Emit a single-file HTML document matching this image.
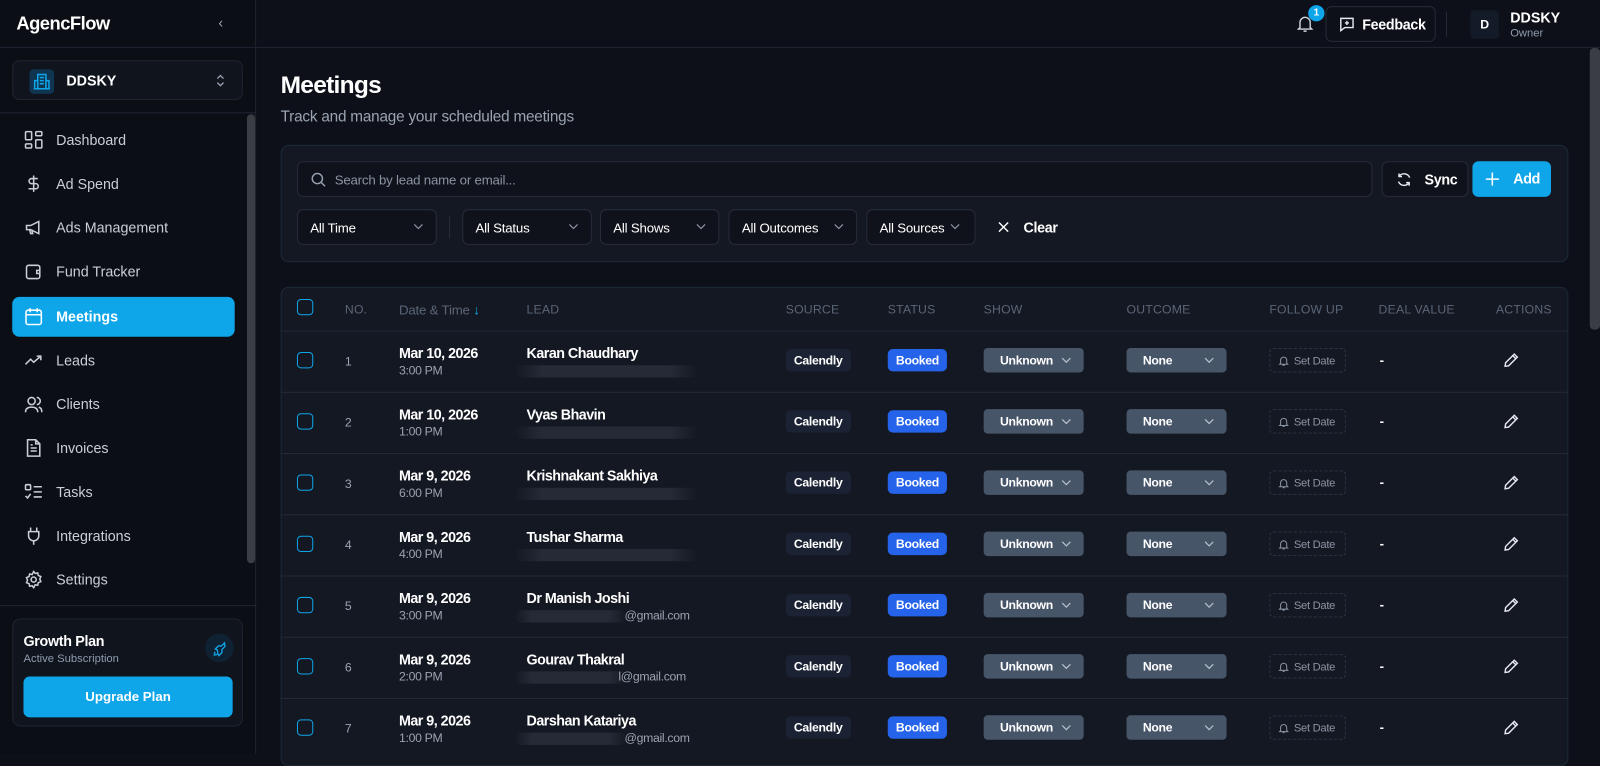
<!DOCTYPE html>
<html><head><meta charset="utf-8"><style>
*{box-sizing:border-box;margin:0;padding:0}
html,body{width:1600px;height:739px;overflow:hidden;background:#0d1018}
#w{position:absolute;left:0;top:0;width:1568px;height:724px;transform:scale(1.0204);transform-origin:0 0;font-family:"Liberation Sans",sans-serif;color:#e6e9ef}
.sb{position:absolute;left:0;top:0;width:251px;height:739px;background:#0b0e15;border-right:1px solid #1e2431}
.logo{position:absolute;left:16px;top:13px;font-size:18px;font-weight:bold;color:#fff;letter-spacing:-0.5px}
.coll{position:absolute;left:214px;top:14px;color:#9aa3b2;font-size:14px}
.hl{position:absolute;left:0;height:1px;background:#1e2431}
.ws{position:absolute;left:12px;top:59px;width:226px;height:39px;border:1px solid #1e2431;border-radius:7px;background:#10141d}
.ws .ic{position:absolute;left:16px;top:8px;width:24px;height:24px;background:#0f3550;border-radius:4px}
.ws .t{position:absolute;left:52px;top:11px;font-weight:bold;font-size:14px;color:#fff}
.nav{position:absolute;left:12px;width:218px;height:39px;border-radius:7px;font-size:14px;color:#c9ced8}
.nav svg{position:absolute;left:12px;top:10px}
.nav span{position:absolute;left:43px;top:11px}
.nav.act{background:#0ea5e9;color:#fff;font-weight:bold}
.scr{position:absolute;left:242px;top:112px;width:8px;height:440px;background:#3a3d44;border-radius:4px}
.gp{position:absolute;left:12px;top:606px;width:226px;height:106px;border:1px solid #1e2431;border-radius:8px;background:#10141d}
.top{position:absolute;left:251px;top:0;width:1317px;height:47px;border-bottom:1px solid #1e2431}
.card{position:absolute;background:#141822;border:1px solid #1c2a3a;border-radius:8px}
.sel{position:absolute;top:205px;height:35px;border:1px solid #262c39;border-radius:6px;background:#0f121a;font-size:13px;color:#fff;padding:10px 12px;letter-spacing:-.2px}
.sel svg,.dd svg{position:absolute;right:12px;top:13px}
.th{position:absolute;top:296px;font-size:12px;color:#5a6577;letter-spacing:.2px}
.cb{position:absolute;left:291px;width:16px;height:16px;border:1.5px solid #0ea5e9;border-radius:4px}
.row{position:absolute;left:275px;width:1262px;height:60px;border-top:1px solid #232a36}
.c{position:absolute}
.pill{position:absolute;height:22px;border-radius:5px;font-size:12px;font-weight:bold;padding:5px 8px;line-height:12px;letter-spacing:-.3px}
.dd{position:absolute;height:24px;width:98px;border-radius:4px;background:#475569;font-size:12px;color:#fff;font-weight:bold;padding:6px 16px;line-height:12px;letter-spacing:-.3px}
.dd svg{top:9px}
.blur{position:absolute;height:12px;background:linear-gradient(90deg,rgba(40,44,56,0),#262a36 15%,#262a36 85%,rgba(40,44,56,0));border-radius:6px}
</style></head><body><div id="w">
<div class="sb">
<div class="logo">AgencFlow</div>
<div class="coll">&#8249;</div>
<div class="hl" style="top:46px;width:251px"></div>
<div class="ws"><div class="ic"><svg width="24" height="24" viewBox="0 0 24 24" fill="none" stroke="#0ea5e9" stroke-width="1.5"><rect x="8" y="5" width="8" height="14"/><path d="M5 19V11h3M16 11h3v8M4 19h16M10 8h4M10 11h4M10 14h4"/></svg></div><div class="t">DDSKY</div><svg style="position:absolute;right:16px;top:11px" width="10" height="16" viewBox="0 0 10 16" fill="none" stroke="#9aa3b2" stroke-width="1.3"><path d="M2 6l3-3 3 3M2 10l3 3 3-3"/></svg></div>
<div class="hl" style="top:110px;width:251px"></div>
<div class="scr"></div>
<div class="nav" style="top:118px"><svg width="18" height="18" viewBox="0 0 18 18" fill="none" stroke="#c9ced8" stroke-width="1.5"><rect x="1" y="1" width="6" height="8" rx="1"/><rect x="11" y="1" width="6" height="4" rx="1"/><rect x="11" y="9" width="6" height="8" rx="1"/><rect x="1" y="13" width="6" height="4" rx="1"/></svg><span>Dashboard</span></div>
<div class="nav" style="top:161px"><svg width="18" height="18" viewBox="0 0 18 18" fill="none" stroke="#c9ced8" stroke-width="1.5"><path d="M9 1v16M13 4H7a2.5 2.5 0 000 5h4a2.5 2.5 0 010 5H4"/></svg><span>Ad Spend</span></div>
<div class="nav" style="top:204px"><svg width="18" height="18" viewBox="0 0 18 18" fill="none" stroke="#c9ced8" stroke-width="1.5"><path d="M2 7h4l8-4v12l-8-4H2zM5 11l1 4h2l-1-4"/></svg><span>Ads Management</span></div>
<div class="nav" style="top:247px"><svg width="18" height="18" viewBox="0 0 18 18" fill="none" stroke="#c9ced8" stroke-width="1.5"><rect x="2" y="3" width="13" height="13" rx="2"/><path d="M15 8h-3v3h3"/></svg><span>Fund Tracker</span></div>
<div class="nav act" style="top:291px"><svg width="18" height="18" viewBox="0 0 18 18" fill="none" stroke="#fff" stroke-width="1.5"><rect x="1.5" y="3" width="15" height="14" rx="2"/><path d="M1.5 7.5h15M5.5 1v4M12.5 1v4"/></svg><span>Meetings</span></div>
<div class="nav" style="top:334px"><svg width="18" height="18" viewBox="0 0 18 18" fill="none" stroke="#c9ced8" stroke-width="1.5"><path d="M1 13l5-5 3 3 7-6M12 5h4v4"/></svg><span>Leads</span></div>
<div class="nav" style="top:377px"><svg width="18" height="18" viewBox="0 0 18 18" fill="none" stroke="#c9ced8" stroke-width="1.5"><circle cx="7" cy="6" r="3.5"/><path d="M1 17c0-4 3-5 6-5s6 1 6 5M12 2.5a3.5 3.5 0 010 7M14 12c2 .5 3 2 3 5"/></svg><span>Clients</span></div>
<div class="nav" style="top:420px"><svg width="18" height="18" viewBox="0 0 18 18" fill="none" stroke="#c9ced8" stroke-width="1.5"><path d="M3 1h8l4 4v12H3zM11 1v4h4M6 9h6M6 12h6M6 6h2"/></svg><span>Invoices</span></div>
<div class="nav" style="top:463px"><svg width="18" height="18" viewBox="0 0 18 18" fill="none" stroke="#c9ced8" stroke-width="1.5"><rect x="1" y="2" width="5" height="5" rx="1"/><path d="M1 13l2 2 3-4M9 4h8M9 9h8M9 14h8"/></svg><span>Tasks</span></div>
<div class="nav" style="top:506px"><svg width="18" height="18" viewBox="0 0 18 18" fill="none" stroke="#c9ced8" stroke-width="1.5"><path d="M6 1v4M12 1v4M4 5h10v4a5 5 0 01-10 0zM9 14v4"/></svg><span>Integrations</span></div>
<div class="nav" style="top:549px"><svg width="18" height="18" viewBox="0 0 18 18" fill="none" stroke="#c9ced8" stroke-width="1.5"><circle cx="9" cy="9" r="2.5"/><path d="M9 1l1.5 2 2.5-.5.5 2.5 2.5 1-1 2.5 1 2.5-2.5 1-.5 2.5-2.5-.5L9 17l-1.5-2-2.5.5-.5-2.5-2.5-1 1-2.5-1-2.5 2.5-1 .5-2.5 2.5.5z"/></svg><span>Settings</span></div>
<div class="hl" style="top:593px;width:251px"></div>
<div class="gp">
<div style="position:absolute;left:10px;top:13px;font-size:14px;font-weight:bold;color:#fff;letter-spacing:-.3px">Growth Plan</div>
<div style="position:absolute;left:10px;top:33px;font-size:11px;color:#8f9bb0">Active Subscription</div>
<div style="position:absolute;left:188px;top:14px;width:28px;height:28px;border-radius:14px;background:#0f2233"><svg width="28" height="28" viewBox="0 0 28 28" fill="none" stroke="#0ea5e9" stroke-width="1.3"><path d="M10 18l-1 1M12 20c-1 1-3 1-3 1s0-2 1-3M12 16l-2-1 3-3h3l3-3 .5 3.5-3 3v3l-3 3-1-2z"/></svg></div>
<div style="position:absolute;left:10px;top:56px;width:205px;height:40px;border-radius:6px;background:#0ea5e9;color:#fff;font-weight:bold;font-size:13px;text-align:center;line-height:40px">Upgrade Plan</div>
</div>
</div>

<div class="top">
<svg style="position:absolute;left:1020px;top:14px" width="16" height="18" viewBox="0 0 16 18" fill="none" stroke="#d0d5dd" stroke-width="1.4"><path d="M3 13V8a5 5 0 0110 0v5l1.5 1.5h-13zM6.5 16.5h3"/></svg>
<div style="position:absolute;left:1031px;top:5px;width:16px;height:16px;border-radius:8px;background:#0ea5e9;color:#fff;font-size:10px;font-weight:bold;text-align:center;line-height:16px">1</div>
<div style="position:absolute;left:1048px;top:6px;width:108px;height:35px;border:1px solid #262c39;border-radius:6px;font-size:14px;font-weight:bold;color:#fff"><svg style="position:absolute;left:12px;top:9px" width="16" height="16" viewBox="0 0 16 16" fill="none" stroke="#e6e9ef" stroke-width="1.4"><path d="M2 2h12v9H6l-4 3zM8 4.5v4M6 6.5h4"/></svg><span style="position:absolute;left:35px;top:9px;letter-spacing:-.3px">Feedback</span></div>
<div style="position:absolute;left:1166px;top:12px;width:1px;height:24px;background:#262c39"></div>
<div style="position:absolute;left:1190px;top:10px;width:28px;height:28px;border-radius:4px;background:#131a28;color:#fff;font-weight:bold;font-size:12px;text-align:center;line-height:28px">D</div>
<div style="position:absolute;left:1229px;top:9px;font-weight:bold;font-size:14px;color:#fff">DDSKY</div>
<div style="position:absolute;left:1229px;top:27px;font-size:11px;color:#8f9bb0">Owner</div>
</div>
<div style="position:absolute;left:1558px;top:47px;width:10px;height:276px;background:#3a3d44;border-radius:4px"></div>

<div style="position:absolute;left:275px;top:70px;font-size:24px;font-weight:bold;color:#fff;letter-spacing:-0.7px">Meetings</div>
<div style="position:absolute;left:275px;top:106px;font-size:15px;color:#9aa3b2;letter-spacing:-.2px">Track and manage your scheduled meetings</div>

<div class="card" style="left:275px;top:142px;width:1262px;height:115px"></div>
<div style="position:absolute;left:291px;top:158px;width:1054px;height:35px;border:1px solid #262c39;border-radius:6px;background:#0f121a"><svg style="position:absolute;left:12px;top:9px" width="16" height="16" viewBox="0 0 16 16" fill="none" stroke="#9aa3b2" stroke-width="1.4"><circle cx="7" cy="7" r="5"/><path d="M11 11l3.5 3.5"/></svg><span style="position:absolute;left:36px;top:10px;font-size:13px;color:#8a93a3;letter-spacing:-.2px">Search by lead name or email...</span></div>
<div style="position:absolute;left:1354px;top:158px;width:85px;height:35px;border:1px solid #262c39;border-radius:6px;background:#0f121a;font-weight:bold;font-size:14px;color:#fff"><svg style="position:absolute;left:13px;top:9px" width="16" height="16" viewBox="0 0 16 16" fill="none" stroke="#e6e9ef" stroke-width="1.4"><path d="M13.5 6A6 6 0 003 5M2.5 10A6 6 0 0013 11M3 2v3h3M13 14v-3h-3"/></svg><span style="position:absolute;left:41px;top:9px;letter-spacing:-.3px">Sync</span></div>
<div style="position:absolute;left:1443px;top:158px;width:77px;height:35px;border-radius:6px;background:#0ea5e9;font-weight:bold;font-size:14px;color:#fff"><svg style="position:absolute;left:13px;top:11px" width="13" height="13" viewBox="0 0 13 13" stroke="#fff" stroke-width="1.5"><path d="M6.5 0v13M0 6.5h13"/></svg><span style="position:absolute;left:40px;top:9px;letter-spacing:-.3px">Add</span></div>
<div class="sel" style="left:291px;width:137px">All Time<svg width="10" height="6" viewBox="0 0 10 6" fill="none" stroke="#8a93a3" stroke-width="1.2"><path d="M1 1l4 4 4-4"/></svg></div>
<div style="position:absolute;left:440px;top:212px;width:1px;height:22px;background:#262c39"></div>
<div class="sel" style="left:453px;width:127px">All Status<svg width="10" height="6" viewBox="0 0 10 6" fill="none" stroke="#8a93a3" stroke-width="1.2"><path d="M1 1l4 4 4-4"/></svg></div>
<div class="sel" style="left:588px;width:117px">All Shows<svg width="10" height="6" viewBox="0 0 10 6" fill="none" stroke="#8a93a3" stroke-width="1.2"><path d="M1 1l4 4 4-4"/></svg></div>
<div class="sel" style="left:714px;width:126px">All Outcomes<svg width="10" height="6" viewBox="0 0 10 6" fill="none" stroke="#8a93a3" stroke-width="1.2"><path d="M1 1l4 4 4-4"/></svg></div>
<div class="sel" style="left:849px;width:107px">All Sources<svg style="right:14px" width="10" height="6" viewBox="0 0 10 6" fill="none" stroke="#8a93a3" stroke-width="1.2"><path d="M1 1l4 4 4-4"/></svg></div>
<svg style="position:absolute;left:978px;top:217px" width="11" height="11" viewBox="0 0 11 11" stroke="#fff" stroke-width="1.4"><path d="M1 1l9 9M10 1l-9 9"/></svg>
<div style="position:absolute;left:1003px;top:215px;font-size:14px;font-weight:bold;color:#fff;letter-spacing:-.3px">Clear</div>

<div class="card" style="left:275px;top:281px;width:1262px;height:470px"></div>
<div class="cb" style="top:293px"></div>
<div class="th" style="left:338px">NO.</div>
<div class="th" style="left:391px;font-size:13px;letter-spacing:-.2px">Date &amp; Time <span style="color:#0ea5e9">&#8595;</span></div>
<div class="th" style="left:516px">LEAD</div>
<div class="th" style="left:770px">SOURCE</div>
<div class="th" style="left:870px">STATUS</div>
<div class="th" style="left:964px">SHOW</div>
<div class="th" style="left:1104px">OUTCOME</div>
<div class="th" style="left:1244px">FOLLOW UP</div>
<div class="th" style="left:1351px">DEAL VALUE</div>
<div class="th" style="left:1466px">ACTIONS</div>

<div id="rows"></div>
</div>
<script>
var d=[["Mar 10, 2026","3:00 PM","Karan Chaudhary",""],["Mar 10, 2026","1:00 PM","Vyas Bhavin",""],["Mar 9, 2026","6:00 PM","Krishnakant Sakhiya",""],["Mar 9, 2026","4:00 PM","Tushar Sharma",""],["Mar 9, 2026","3:00 PM","Dr Manish Joshi","@gmail.com"],["Mar 9, 2026","2:00 PM","Gourav Thakral","l@gmail.com"],["Mar 9, 2026","1:00 PM","Darshan Katariya","@gmail.com"]];
var chev='<svg width="10" height="6" viewBox="0 0 10 6" fill="none" stroke="#b8c0cc" stroke-width="1.2"><path d="M1 1l4 4 4-4"/></svg>';
var h="";
d.forEach(function(r,i){var t=324+i*60,y=t+29;
h+='<div class="row" style="top:'+t+'px"></div>';
h+='<div class="cb" style="top:'+(y-8)+'px"></div>';
h+='<div class="c" style="left:338px;top:'+(y-6)+'px;font-size:12px;color:#9aa3b2">'+(i+1)+'</div>';
h+='<div class="c" style="left:391px;top:'+(y-15)+'px;font-size:14px;font-weight:bold;color:#fff;letter-spacing:-.5px">'+r[0]+'</div>';
h+='<div class="c" style="left:391px;top:'+(y+3)+'px;font-size:12px;color:#9aa3b2;letter-spacing:-.3px">'+r[1]+'</div>';
h+='<div class="c" style="left:516px;top:'+(y-15)+'px;font-size:14px;font-weight:bold;color:#fff;letter-spacing:-.5px">'+r[2]+'</div>';
h+='<div class="blur" style="left:504px;top:'+(y+5)+'px;width:'+(r[3]?110:180)+'px"></div>';
if(r[3])h+='<div class="c" style="left:'+(r[3].length>10?606:612)+'px;top:'+(y+3)+'px;font-size:12px;color:#9aa3b2;letter-spacing:-.3px">'+r[3]+'</div>';
h+='<div class="pill" style="left:770px;top:'+(y-11)+'px;background:#1a2233;color:#fff">Calendly</div>';
h+='<div class="pill" style="left:870px;top:'+(y-11)+'px;background:#2563eb;color:#fff">Booked</div>';
h+='<div class="dd" style="left:964px;top:'+(y-12)+'px">Unknown'+chev+'</div>';
h+='<div class="dd" style="left:1104px;top:'+(y-12)+'px">None'+chev+'</div>';
h+='<div class="c" style="left:1244px;top:'+(y-12)+'px;width:75px;height:24px;border:1px dashed #2c3444;border-radius:4px;font-size:11px;color:#8a93a3;padding:6px 0 0 23px;letter-spacing:-.3px"><svg style="position:absolute;left:8px;top:6px" width="10" height="11" viewBox="0 0 10 11" fill="none" stroke="#8a93a3" stroke-width="1"><path d="M2 8V5a3 3 0 016 0v3l1 1H1zM4 10h2"/></svg>Set Date</div>';
h+='<div class="c" style="left:1352px;top:'+(y-8)+'px;font-size:13px;font-weight:bold;color:#fff">-</div>';
h+='<svg class="c" style="left:1473px;top:'+(y-8)+'px" width="16" height="16" viewBox="0 0 16 16" fill="none" stroke="#e6e9ef" stroke-width="1.4"><path d="M11 2l3 3-8.5 8.5L2 14l.5-3.5zM9.5 3.5l3 3"/></svg>';
});
document.getElementById("rows").innerHTML=h;
</script>
</body></html>
